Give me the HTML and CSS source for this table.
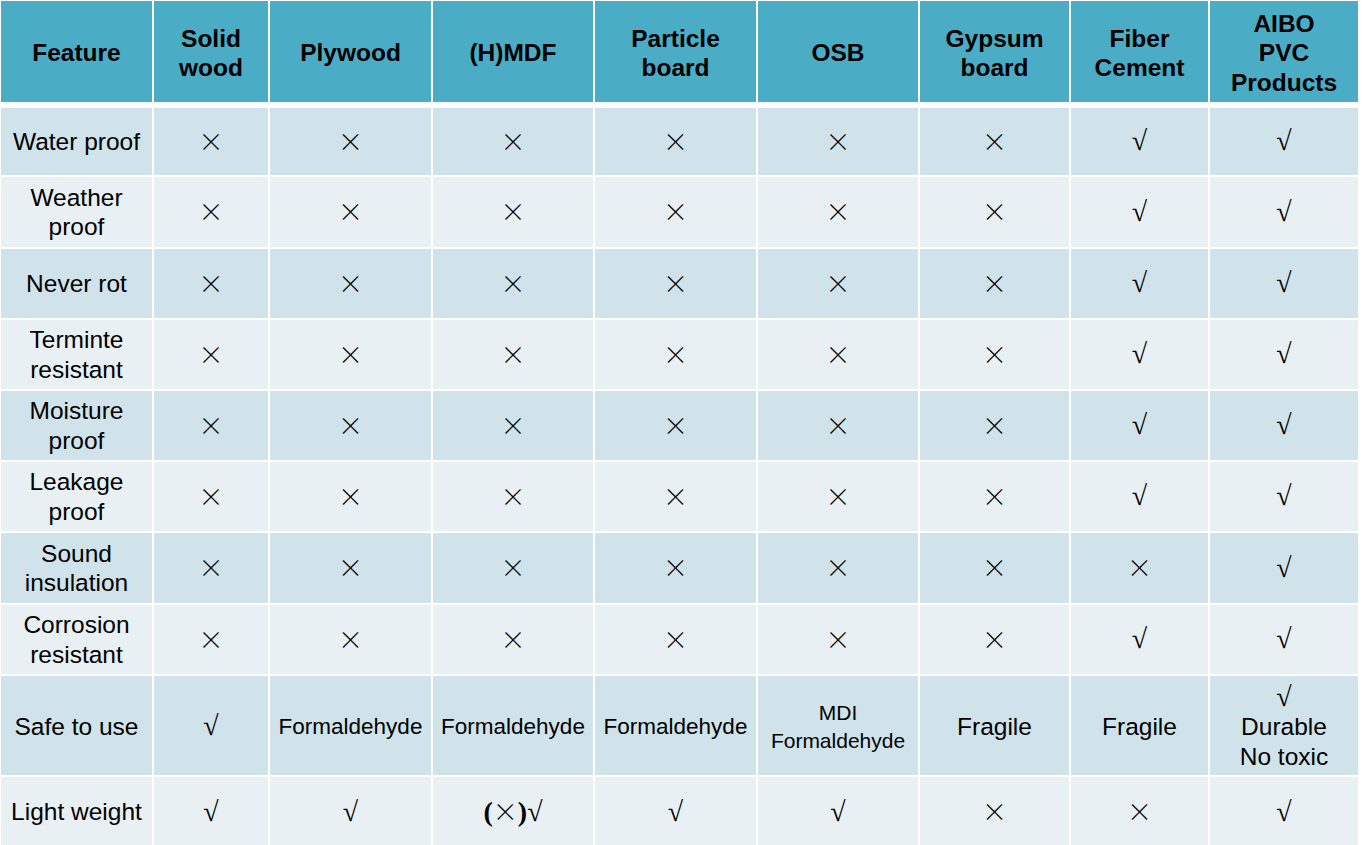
FILE: index.html
```html
<!DOCTYPE html>
<html lang="en">
<head>
<meta charset="utf-8">
<title>Material comparison</title>
<link rel="stylesheet" href="styles.css">
</head>
<body>
<table class="cmp">
  <colgroup>
    <col class="c1"><col class="c2"><col class="c3"><col class="c4"><col class="c5"><col class="c6"><col class="c7"><col class="c8"><col class="c9">
  </colgroup>
  <thead>
    <tr>
      <th>Feature</th>
      <th>Solid<br>wood</th>
      <th>Plywood</th>
      <th>(H)MDF</th>
      <th>Particle<br>board</th>
      <th>OSB</th>
      <th>Gypsum<br>board</th>
      <th>Fiber<br>Cement</th>
      <th>AIBO<br>PVC<br>Products</th>
    </tr>
  </thead>
  <tbody>
    <tr class="odd first">
      <td class="feat">Water proof</td>
      <td><span class="no">×</span></td><td><span class="no">×</span></td><td><span class="no">×</span></td><td><span class="no">×</span></td><td><span class="no">×</span></td><td><span class="no">×</span></td><td><span class="yes">√</span></td><td><span class="yes">√</span></td>
    </tr>
    <tr class="even h70">
      <td class="feat">Weather<br>proof</td>
      <td><span class="no">×</span></td><td><span class="no">×</span></td><td><span class="no">×</span></td><td><span class="no">×</span></td><td><span class="no">×</span></td><td><span class="no">×</span></td><td><span class="yes">√</span></td><td><span class="yes">√</span></td>
    </tr>
    <tr class="odd">
      <td class="feat">Never rot</td>
      <td><span class="no">×</span></td><td><span class="no">×</span></td><td><span class="no">×</span></td><td><span class="no">×</span></td><td><span class="no">×</span></td><td><span class="no">×</span></td><td><span class="yes">√</span></td><td><span class="yes">√</span></td>
    </tr>
    <tr class="even">
      <td class="feat">Terminte<br>resistant</td>
      <td><span class="no">×</span></td><td><span class="no">×</span></td><td><span class="no">×</span></td><td><span class="no">×</span></td><td><span class="no">×</span></td><td><span class="no">×</span></td><td><span class="yes">√</span></td><td><span class="yes">√</span></td>
    </tr>
    <tr class="odd">
      <td class="feat">Moisture<br>proof</td>
      <td><span class="no">×</span></td><td><span class="no">×</span></td><td><span class="no">×</span></td><td><span class="no">×</span></td><td><span class="no">×</span></td><td><span class="no">×</span></td><td><span class="yes">√</span></td><td><span class="yes">√</span></td>
    </tr>
    <tr class="even">
      <td class="feat">Leakage<br>proof</td>
      <td><span class="no">×</span></td><td><span class="no">×</span></td><td><span class="no">×</span></td><td><span class="no">×</span></td><td><span class="no">×</span></td><td><span class="no">×</span></td><td><span class="yes">√</span></td><td><span class="yes">√</span></td>
    </tr>
    <tr class="odd h70">
      <td class="feat">Sound<br>insulation</td>
      <td><span class="no">×</span></td><td><span class="no">×</span></td><td><span class="no">×</span></td><td><span class="no">×</span></td><td><span class="no">×</span></td><td><span class="no">×</span></td><td><span class="no">×</span></td><td><span class="yes">√</span></td>
    </tr>
    <tr class="even">
      <td class="feat">Corrosion<br>resistant</td>
      <td><span class="no">×</span></td><td><span class="no">×</span></td><td><span class="no">×</span></td><td><span class="no">×</span></td><td><span class="no">×</span></td><td><span class="no">×</span></td><td><span class="yes">√</span></td><td><span class="yes">√</span></td>
    </tr>
    <tr class="odd tall">
      <td class="feat">Safe to use</td>
      <td><span class="yes">√</span></td>
      <td class="small">Formaldehyde</td>
      <td class="small">Formaldehyde</td>
      <td class="small">Formaldehyde</td>
      <td class="smaller">MDI<br>Formaldehyde</td>
      <td>Fragile</td>
      <td>Fragile</td>
      <td class="stack"><span class="yes">√</span><br>Durable<br>No toxic</td>
    </tr>
    <tr class="even last">
      <td class="feat">Light weight</td>
      <td><span class="yes">√</span></td>
      <td><span class="yes">√</span></td>
      <td><span class="paren">(</span><span class="no">×</span><span class="paren">)</span><span class="yes">√</span></td>
      <td><span class="yes">√</span></td>
      <td><span class="yes">√</span></td>
      <td><span class="no">×</span></td>
      <td><span class="no">×</span></td>
      <td><span class="yes">√</span></td>
    </tr>
  </tbody>
</table>
</body>
</html>
```

FILE: styles.css
```css
html, body {
  margin: 0;
  padding: 0;
  background: #ffffff;
}

body {
  font-family: "Liberation Sans", Arial, sans-serif;
  color: #000000;
}

.cmp {
  table-layout: fixed;
  border-collapse: separate;
  border-spacing: 2px;
  width: 1361px;
  margin: -1px 0 0 -1px;
  font-size: 24.5px;
  line-height: 29.5px;
}

.c1 { width: 151px; }
.c2 { width: 114px; }
.c3 { width: 161px; }
.c4 { width: 160px; }
.c5 { width: 161px; }
.c6 { width: 160px; }
.c7 { width: 149px; }
.c8 { width: 137px; }
.c9 { width: 148px; }

.cmp th,
.cmp td {
  box-sizing: border-box;
  padding: 0;
  text-align: center;
  vertical-align: middle;
  overflow: visible;
  white-space: nowrap;
}

.cmp th {
  background: #4bacc6;
  font-weight: bold;
  height: 105px;
  padding-top: 3px;
  border-bottom: 4px solid #ffffff;
}

.cmp tr.odd td { background: #d0e3ea; }
.cmp tr.even td { background: #e9f0f3; }

.cmp tbody tr td { height: 69px; }
.cmp tbody tr.first td { height: 67px; }
.cmp tbody tr.h70 td { height: 70px; }
.cmp tbody tr.tall td { height: 99px; padding-top: 2px; }
.cmp tbody tr.last td { height: 68px; padding-top: 2px; }

.cmp td.small { font-size: 22.5px; }
.cmp td.smaller { font-size: 21px; line-height: 28px; }

.no {
  font-family: "Noto Sans CJK SC", "DejaVu Sans", sans-serif;
  font-weight: 300;
  font-size: 25px;
}

.yes {
  font-family: "Liberation Serif", "DejaVu Serif", serif;
  font-size: 28px;
}

.paren {
  font-family: "Liberation Serif", serif;
  font-weight: bold;
  font-size: 28px;
}

.stack { line-height: 29.5px; }
```
